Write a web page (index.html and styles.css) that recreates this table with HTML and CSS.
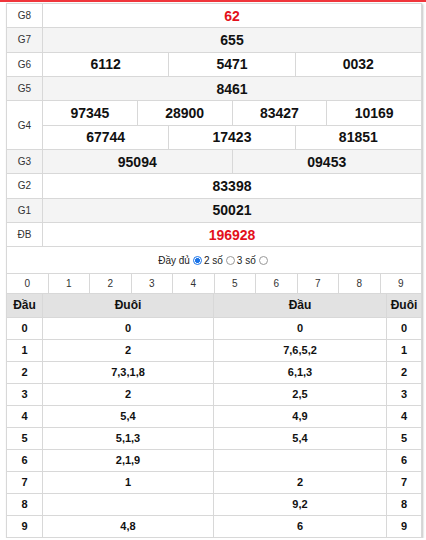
FILE: index.html
```html
<!DOCTYPE html>
<html lang="vi">
<head>
<meta charset="utf-8">
<title>Kết quả</title>
<link rel="stylesheet" href="styles.css">
</head>
<body>
<div class="topline"></div>
<div class="box">
  <div class="kq">
    <div class="row"><div class="lbl">G8</div><div class="val"><div class="sub"><div class="c red">62</div></div></div></div>
    <div class="row alt"><div class="lbl">G7</div><div class="val"><div class="sub"><div class="c">655</div></div></div></div>
    <div class="row"><div class="lbl">G6</div><div class="val"><div class="sub"><div class="c">6112</div><div class="c">5471</div><div class="c">0032</div></div></div></div>
    <div class="row alt"><div class="lbl">G5</div><div class="val"><div class="sub"><div class="c">8461</div></div></div></div>
    <div class="row double"><div class="lbl">G4</div><div class="val">
      <div class="sub"><div class="c">97345</div><div class="c">28900</div><div class="c">83427</div><div class="c">10169</div></div>
      <div class="sub"><div class="c">67744</div><div class="c">17423</div><div class="c">81851</div></div>
    </div></div>
    <div class="row alt"><div class="lbl">G3</div><div class="val"><div class="sub"><div class="c">95094</div><div class="c">09453</div></div></div></div>
    <div class="row"><div class="lbl">G2</div><div class="val"><div class="sub"><div class="c">83398</div></div></div></div>
    <div class="row alt"><div class="lbl">G1</div><div class="val"><div class="sub"><div class="c">50021</div></div></div></div>
    <div class="row"><div class="lbl">ĐB</div><div class="val"><div class="sub"><div class="c red">196928</div></div></div></div>
  </div>
  <div class="opts">
    <span>Đầy đủ</span><span class="radio on"></span><span>2 số</span><span class="radio"></span><span>3 số</span><span class="radio"></span>
  </div>
  <div class="digits">
    <div>0</div><div>1</div><div>2</div><div>3</div><div>4</div><div>5</div><div>6</div><div>7</div><div>8</div><div>9</div>
  </div>
  <div class="lt">
    <div class="h">Đầu</div><div class="h">Đuôi</div><div class="h">Đầu</div><div class="h">Đuôi</div>
    <div>0</div><div>0</div><div>0</div><div>0</div>
    <div>1</div><div>2</div><div>7,6,5,2</div><div>1</div>
    <div>2</div><div>7,3,1,8</div><div>6,1,3</div><div>2</div>
    <div>3</div><div>2</div><div>2,5</div><div>3</div>
    <div>4</div><div>5,4</div><div>4,9</div><div>4</div>
    <div>5</div><div>5,1,3</div><div>5,4</div><div>5</div>
    <div>6</div><div>2,1,9</div><div></div><div>6</div>
    <div>7</div><div>1</div><div>2</div><div>7</div>
    <div>8</div><div></div><div>9,2</div><div>8</div>
    <div>9</div><div>4,8</div><div>6</div><div>9</div>
  </div>
</div>
</body>
</html>
```

FILE: styles.css
```css
html, body {
  margin: 0;
  padding: 0;
  background: #fff;
}
body {
  font-family: "Liberation Sans", Arial, sans-serif;
  color: #111;
}
.topline {
  height: 2px;
  background: #f0353b;
  margin-bottom: 1px;
}
.box {
  margin-left: 6px;
  width: 416px;
  box-sizing: border-box;
  border: 1px solid #d8d8d8;
  border-bottom: none;
  box-shadow: 1px 1px 2px rgba(0, 0, 0, 0.25);
}
.row {
  display: flex;
  height: 24.33px;
  box-sizing: border-box;
  border-bottom: 1px solid #d8d8d8;
  background: #fff;
}
.row.double {
  height: 48.66px;
}
.row.alt {
  background: #f4f4f4;
}
.lbl {
  width: 36px;
  flex: none;
  box-sizing: border-box;
  border-right: 1px solid #d8d8d8;
  display: flex;
  align-items: center;
  justify-content: center;
  font-size: 10px;
  color: #333;
}
.val {
  flex: 1;
  display: flex;
  flex-direction: column;
}
.sub {
  flex: 1;
  display: flex;
}
.sub + .sub {
  border-top: 1px solid #d8d8d8;
}
.c {
  flex: 1 1 0;
  display: flex;
  align-items: center;
  justify-content: center;
  font-size: 14px;
  font-weight: bold;
  color: #111;
}
.c + .c {
  border-left: 1px solid #d8d8d8;
}
.c.red {
  color: #e3101b;
}
.opts {
  height: 26.67px;
  box-sizing: border-box;
  border-bottom: 1px solid #d8d8d8;
  display: flex;
  align-items: center;
  justify-content: center;
  font-size: 10px;
  color: #222;
}
.radio {
  display: inline-block;
  width: 9px;
  height: 9px;
  box-sizing: border-box;
  border: 1px solid #999;
  border-radius: 50%;
  margin: 0 2px 0 3px;
  background: #fff;
}
.radio.on {
  border-color: #1a73e8;
  background: radial-gradient(circle, #1a73e8 0 2.2px, #fff 2.7px);
}
.digits {
  display: grid;
  grid-template-columns: repeat(10, 1fr);
  height: 20px;
  box-sizing: border-box;
  border-bottom: 1px solid #d8d8d8;
  margin-left: -1px;
}
.digits div {
  display: flex;
  align-items: center;
  justify-content: center;
  font-size: 10px;
  color: #333;
  border-left: 1px solid #d8d8d8;
}
.digits div:first-child {
  border-left: 1px solid transparent;
}
.lt {
  display: grid;
  grid-template-columns: 36px 171px 173px 1fr;
  grid-template-rows: 24px;
  grid-auto-rows: 22px;
}
.lt div {
  box-sizing: border-box;
  border-bottom: 1px solid #d8d8d8;
  display: flex;
  align-items: center;
  justify-content: center;
  font-size: 11px;
  font-weight: bold;
  color: #111;
}
.lt div:not(:nth-child(4n)) {
  border-right: 1px solid #d8d8d8;
}
.lt .h {
  background: #e2e2e2;
  font-size: 12px;
}
```
